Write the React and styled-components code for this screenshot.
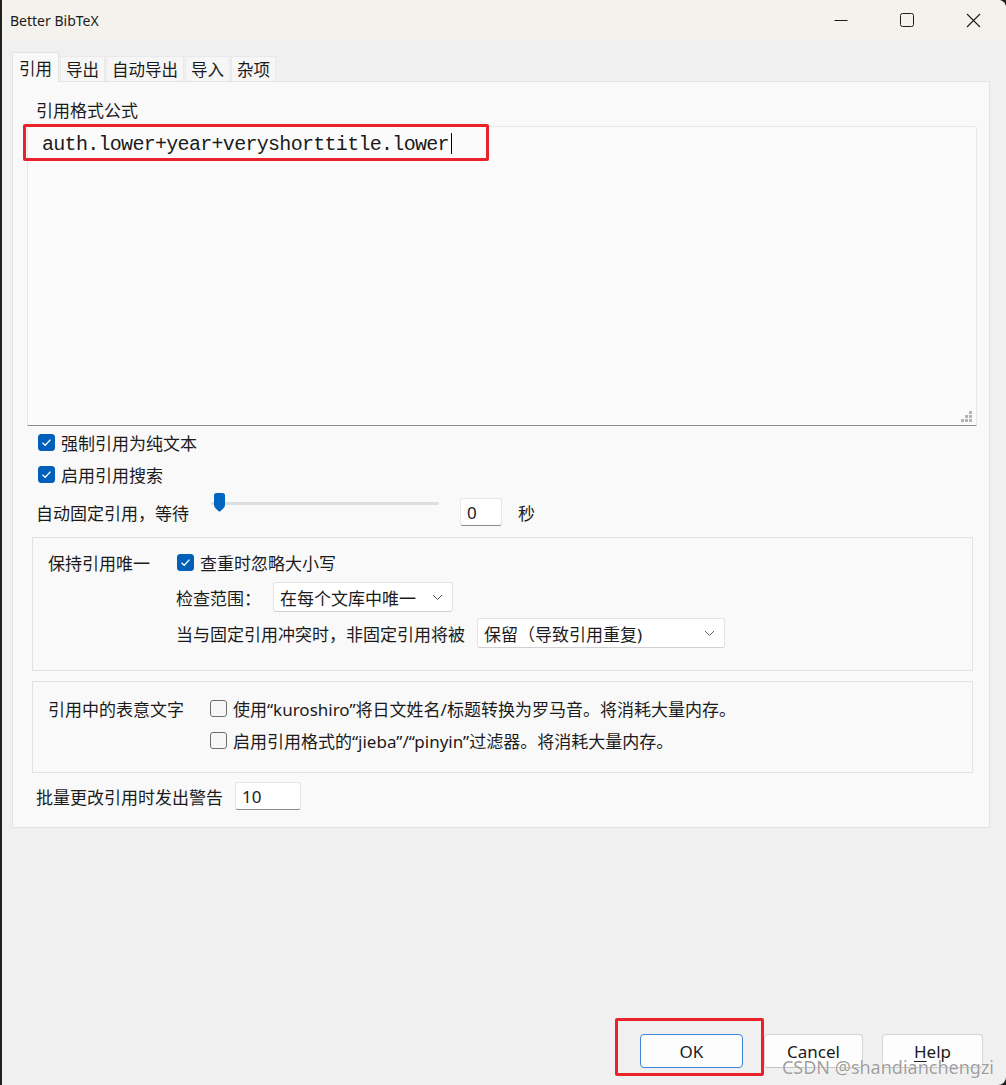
import React from "react";
import styled, { createGlobalStyle } from "styled-components";

const GlobalStyle = createGlobalStyle`
  html, body { margin: 0; padding: 0; background: #202020; }
  body { font-family: "Noto Sans", "Noto Sans CJK SC", sans-serif; color: #1b1b1b; }
  * { box-sizing: border-box; }
`;

const Window = styled.div`
  position: relative;
  width: 1004px;
  height: 1085px;
  margin-left: 2px;
  border-radius: 0 8px 8px 0;
  overflow: hidden;
  background: #f0f0f0;
  display: flex;
  flex-direction: column;
`;

const TitleBar = styled.div`
  height: 40px;
  flex: none;
  background: #f4f2ed;
  display: flex;
  align-items: center;
  padding-left: 8px;
`;

const Title = styled.div`
  flex: 1;
  font-family: "Noto Sans", sans-serif;
  font-size: 14px;
  color: #1b1b1b;
`;

const WinButton = styled.div`
  width: 66px;
  height: 40px;
  display: flex;
  align-items: center;
  justify-content: center;
`;

const Body = styled.div`
  flex: 1;
  display: flex;
  flex-direction: column;
  padding: 12px 16px 0 10px;
`;

const Tabs = styled.div`
  display: flex;
  align-items: flex-end;
  gap: 1px;
  position: relative;
  z-index: 1;
`;

const Tab = styled.div`
  height: ${(p) => (p.$active ? "30px" : "25px")};
  margin-bottom: ${(p) => (p.$active ? "-1px" : "0")};
  padding: 0 ${(p) => (p.$active ? "6px" : "5px")};
  display: flex;
  align-items: center;
  font-size: 16.5px;
  background: ${(p) => (p.$active ? "#f9f9f9" : "#f6f6f6")};
  border: 1px solid ${(p) => (p.$active ? "#e3e3e3" : "#e9e9e9")};
  border-bottom: none;
`;

const Panel = styled.div`
  background: #f9f9f9;
  border: 1px solid #e3e3e3;
  padding: 17px 12px 17px 14px;
  display: flex;
  flex-direction: column;
  font-size: 17px;
`;

const FieldLabel = styled.div`
  line-height: 24px;
  margin-left: 9px;
`;

const EditorWrap = styled.div`
  position: relative;
  margin-top: 3px;
`;

const Editor = styled.div`
  height: 300px;
  background: #fbfbfb;
  border: 1px solid #e8e8e8;
  border-bottom-color: #8a8a8a;
  border-radius: 3px 3px 0 0;
  padding: 6px 14px;
  font-family: "Liberation Mono", monospace;
  font-size: 20px;
  letter-spacing: -0.7px;
  line-height: 24px;
  color: #1a1a1a;
`;

const Caret = styled.span`
  display: inline-block;
  width: 1px;
  height: 21px;
  background: #000;
  vertical-align: -4px;
  margin-left: 2px;
`;

const RedMark = styled.div`
  position: absolute;
  left: ${(p) => p.$l}px;
  top: ${(p) => p.$t}px;
  right: ${(p) => p.$r ?? "auto"}px;
  bottom: ${(p) => p.$b ?? "auto"}px;
  width: ${(p) => (p.$w ? `${p.$w}px` : "auto")};
  height: ${(p) => (p.$h ? `${p.$h}px` : "auto")};
  border: 3px solid #e8232b;
  border-radius: 2px;
  pointer-events: none;
`;

const Grip = styled.svg`
  position: absolute;
  right: 4px;
  bottom: 3px;
`;

const CheckRow = styled.label`
  display: flex;
  align-items: center;
  gap: 6px;
  height: ${(p) => p.$h || 32}px;
  margin-left: ${(p) => p.$ml || 0}px;
`;

const Box = styled.span`
  width: 17px;
  height: 17px;
  flex: none;
  border-radius: 3px;
  display: inline-flex;
  align-items: center;
  justify-content: center;
  background: ${(p) => (p.$checked ? "#005fb8" : "#f6f6f6")};
  border: 1px solid ${(p) => (p.$checked ? "#005fb8" : "#6f6f6f")};
`;

const Row = styled.div`
  display: flex;
  align-items: center;
  height: ${(p) => p.$h || 32}px;
  margin-left: ${(p) => p.$ml || 0}px;
  margin-top: ${(p) => p.$mt || 0}px;
`;

const Slider = styled.div`
  position: relative;
  align-self: flex-start;
  margin: -3px 21px 0 22px;
  width: 228px;
  height: 19px;
`;

const Track = styled.div`
  position: absolute;
  left: 0;
  right: 0;
  top: 9px;
  height: 3px;
  border-radius: 2px;
  background: #dedede;
`;

const Thumb = styled.svg`
  position: absolute;
  left: 3px;
  top: 0;
`;

const TextInput = styled.div`
  width: ${(p) => p.$w}px;
  height: 28px;
  margin-left: ${(p) => p.$ml || 0}px;
  background: #fff;
  border: 1px solid #e6e6e6;
  border-bottom-color: #8c8c8c;
  border-radius: 3px;
  padding-left: 6px;
  display: flex;
  align-items: center;
  font-family: "Noto Sans", sans-serif;
  font-size: 17px;
`;

const Unit = styled.span`
  margin-left: 16px;
`;

const Group = styled.div`
  margin: ${(p) => p.$mt}px 4px 0 5px;
  border: 1px solid #e3e3e3;
  padding: ${(p) => p.$pt}px 15px ${(p) => p.$pb}px 15px;
  display: grid;
  grid-template-columns: auto 1fr;
  column-gap: 26px;
  row-gap: ${(p) => p.$gap}px;
  align-items: center;
`;

const GroupLabel = styled.div`
  grid-column: 1;
  grid-row: 1;
  align-self: center;
`;

const GroupCell = styled.div`
  grid-column: 2;
  display: flex;
  align-items: center;
`;

const Select = styled.div`
  width: ${(p) => p.$w}px;
  height: 30px;
  margin-left: 12px;
  background: #fff;
  border: 1px solid #e3e3e3;
  border-bottom-color: #d0d0d0;
  border-radius: 3px;
  padding: 0 9px 0 6px;
  display: flex;
  align-items: center;
  justify-content: space-between;
`;

const Spacer = styled.div`
  flex: 1;
`;

const Footer = styled.div`
  display: flex;
  justify-content: flex-end;
  padding: 0 7px 17px 0;
`;

const ButtonWrap = styled.div`
  position: relative;
  margin-right: 21px;
`;

const Button = styled.div`
  width: ${(p) => p.$w || 103}px;
  height: 34px;
  margin-right: ${(p) => p.$mr || 0}px;
  display: flex;
  align-items: center;
  justify-content: center;
  background: #fdfdfd;
  border: 1px solid ${(p) => (p.$primary ? "#3d87d6" : "#d6d6d6")};
  border-bottom-color: ${(p) => (p.$primary ? "#3d87d6" : "#c2c2c2")};
  border-radius: 4px;
  font-family: "Noto Sans", sans-serif;
  font-size: 17px;
  color: #1b1b1b;
`;

const Accel = styled.span`
  text-decoration: underline;
  text-underline-offset: 3px;
`;

const Watermark = styled.div`
  position: absolute;
  right: 12px;
  bottom: 6px;
  font-family: "Noto Sans", sans-serif;
  font-size: 18px;
  color: rgba(140, 140, 140, 0.85);
  text-shadow: 0 0 1px #fff, 0 0 1px #fff;
  pointer-events: none;
`;

const Check = () => (
  <svg width="11" height="9" viewBox="0 0 11 9">
    <polyline points="1.5,4.8 4.2,7.3 9.5,1.6" fill="none" stroke="#fff" strokeWidth="1.3" />
  </svg>
);

const Checkbox = ({ checked, children, ...rest }) => (
  <CheckRow {...rest}>
    <Box $checked={checked}>{checked && <Check />}</Box>
    <span>{children}</span>
  </CheckRow>
);

const Chevron = () => (
  <svg width="11" height="7" viewBox="0 0 11 7">
    <polyline points="1,1 5.5,5.5 10,1" fill="none" stroke="#5c5c5c" strokeWidth="1" />
  </svg>
);

const tabs = ["引用", "导出", "自动导出", "导入", "杂项"];

export default function App() {
  return (
    <>
      <GlobalStyle />
      <Window>
        <TitleBar>
          <Title>Better BibTeX</Title>
          <WinButton>
            <svg width="14" height="14" viewBox="0 0 14 14">
              <line x1="0.5" y1="7.5" x2="13.5" y2="7.5" stroke="#1b1b1b" strokeWidth="1" />
            </svg>
          </WinButton>
          <WinButton>
            <svg width="14" height="14" viewBox="0 0 14 14">
              <rect x="0.5" y="0.5" width="13" height="13" rx="2" fill="none" stroke="#1b1b1b" strokeWidth="1" />
            </svg>
          </WinButton>
          <WinButton>
            <svg width="15" height="15" viewBox="0 0 15 15">
              <path d="M1 1 L14 14 M14 1 L1 14" stroke="#1b1b1b" strokeWidth="1.1" />
            </svg>
          </WinButton>
        </TitleBar>

        <Body>
          <Tabs>
            {tabs.map((t, i) => (
              <Tab key={t} $active={i === 0}>{t}</Tab>
            ))}
          </Tabs>
          <Panel>
            <FieldLabel>引用格式公式</FieldLabel>
            <EditorWrap>
              <Editor>
                auth.lower+year+veryshorttitle.lower<Caret />
              </Editor>
              <RedMark $l={-4} $t={-2} $w={466} $h={37} />
              <Grip width="12" height="12" viewBox="0 0 12 12">
                {[[8, 0], [4, 4], [8, 4], [0, 8], [4, 8], [8, 8]].map(([x, y]) => (
                  <rect key={`${x}-${y}`} x={x} y={y} width="3" height="3" fill="#b5b5b5" />
                ))}
              </Grip>
            </EditorWrap>

            <Checkbox checked $ml={11}>强制引用为纯文本</Checkbox>
            <Checkbox checked $ml={11}>启用引用搜索</Checkbox>

            <Row $ml={9} $mt={6}>
              <span>自动固定引用，等待</span>
              <Slider>
                <Track />
                <Thumb width="11" height="19" viewBox="0 0 11 19">
                  <path
                    d="M2.5 0 H8.5 A2.5 2.5 0 0 1 11 2.5 V12 Q11 14 9 15.8 L6.6 18 Q5.5 19 4.4 18 L2 15.8 Q0 14 0 12 V2.5 A2.5 2.5 0 0 1 2.5 0 Z"
                    fill="#0067c0"
                  />
                </Thumb>
              </Slider>
              <TextInput $w={42}>0</TextInput>
              <Unit>秒</Unit>
            </Row>

            <Group $mt={9} $pt={10} $pb={22} $gap={6}>
              <GroupLabel>保持引用唯一</GroupLabel>
              <GroupCell style={{ gridRow: 1 }}>
                <Checkbox checked $h={28} $ml={1}>查重时忽略大小写</Checkbox>
              </GroupCell>
              <GroupCell>
                <span>检查范围：</span>
                <Select $w={180}>
                  <span>在每个文库中唯一</span>
                  <Chevron />
                </Select>
              </GroupCell>
              <GroupCell>
                <span>当与固定引用冲突时，非固定引用将被</span>
                <Select $w={248}>
                  <span>保留（导致引用重复)</span>
                  <Chevron />
                </Select>
              </GroupCell>
            </Group>

            <Group $mt={10} $pt={12} $pb={18} $gap={4}>
              <GroupLabel>引用中的表意文字</GroupLabel>
              <GroupCell style={{ gridRow: 1 }}>
                <Checkbox $h={28}>使用“kuroshiro”将日文姓名/标题转换为罗马音。将消耗大量内存。</Checkbox>
              </GroupCell>
              <GroupCell>
                <Checkbox $h={28}>启用引用格式的“jieba”/“pinyin”过滤器。将消耗大量内存。</Checkbox>
              </GroupCell>
            </Group>

            <Row $ml={9} $mt={9} $h={28}>
              <span>批量更改引用时发出警告</span>
              <TextInput $w={66} $ml={12}>10</TextInput>
            </Row>
          </Panel>

          <Spacer />

          <Footer>
            <ButtonWrap>
              <Button $primary>OK</Button>
              <RedMark $l={-25} $t={-16} $r={-21} $b={-8} />
            </ButtonWrap>
            <Button $w={99} $mr={19}>Cancel</Button>
            <Button $w={101}><Accel>H</Accel>elp</Button>
          </Footer>
        </Body>
        <Watermark>CSDN @shandianchengzi</Watermark>
      </Window>
    </>
  );
}
